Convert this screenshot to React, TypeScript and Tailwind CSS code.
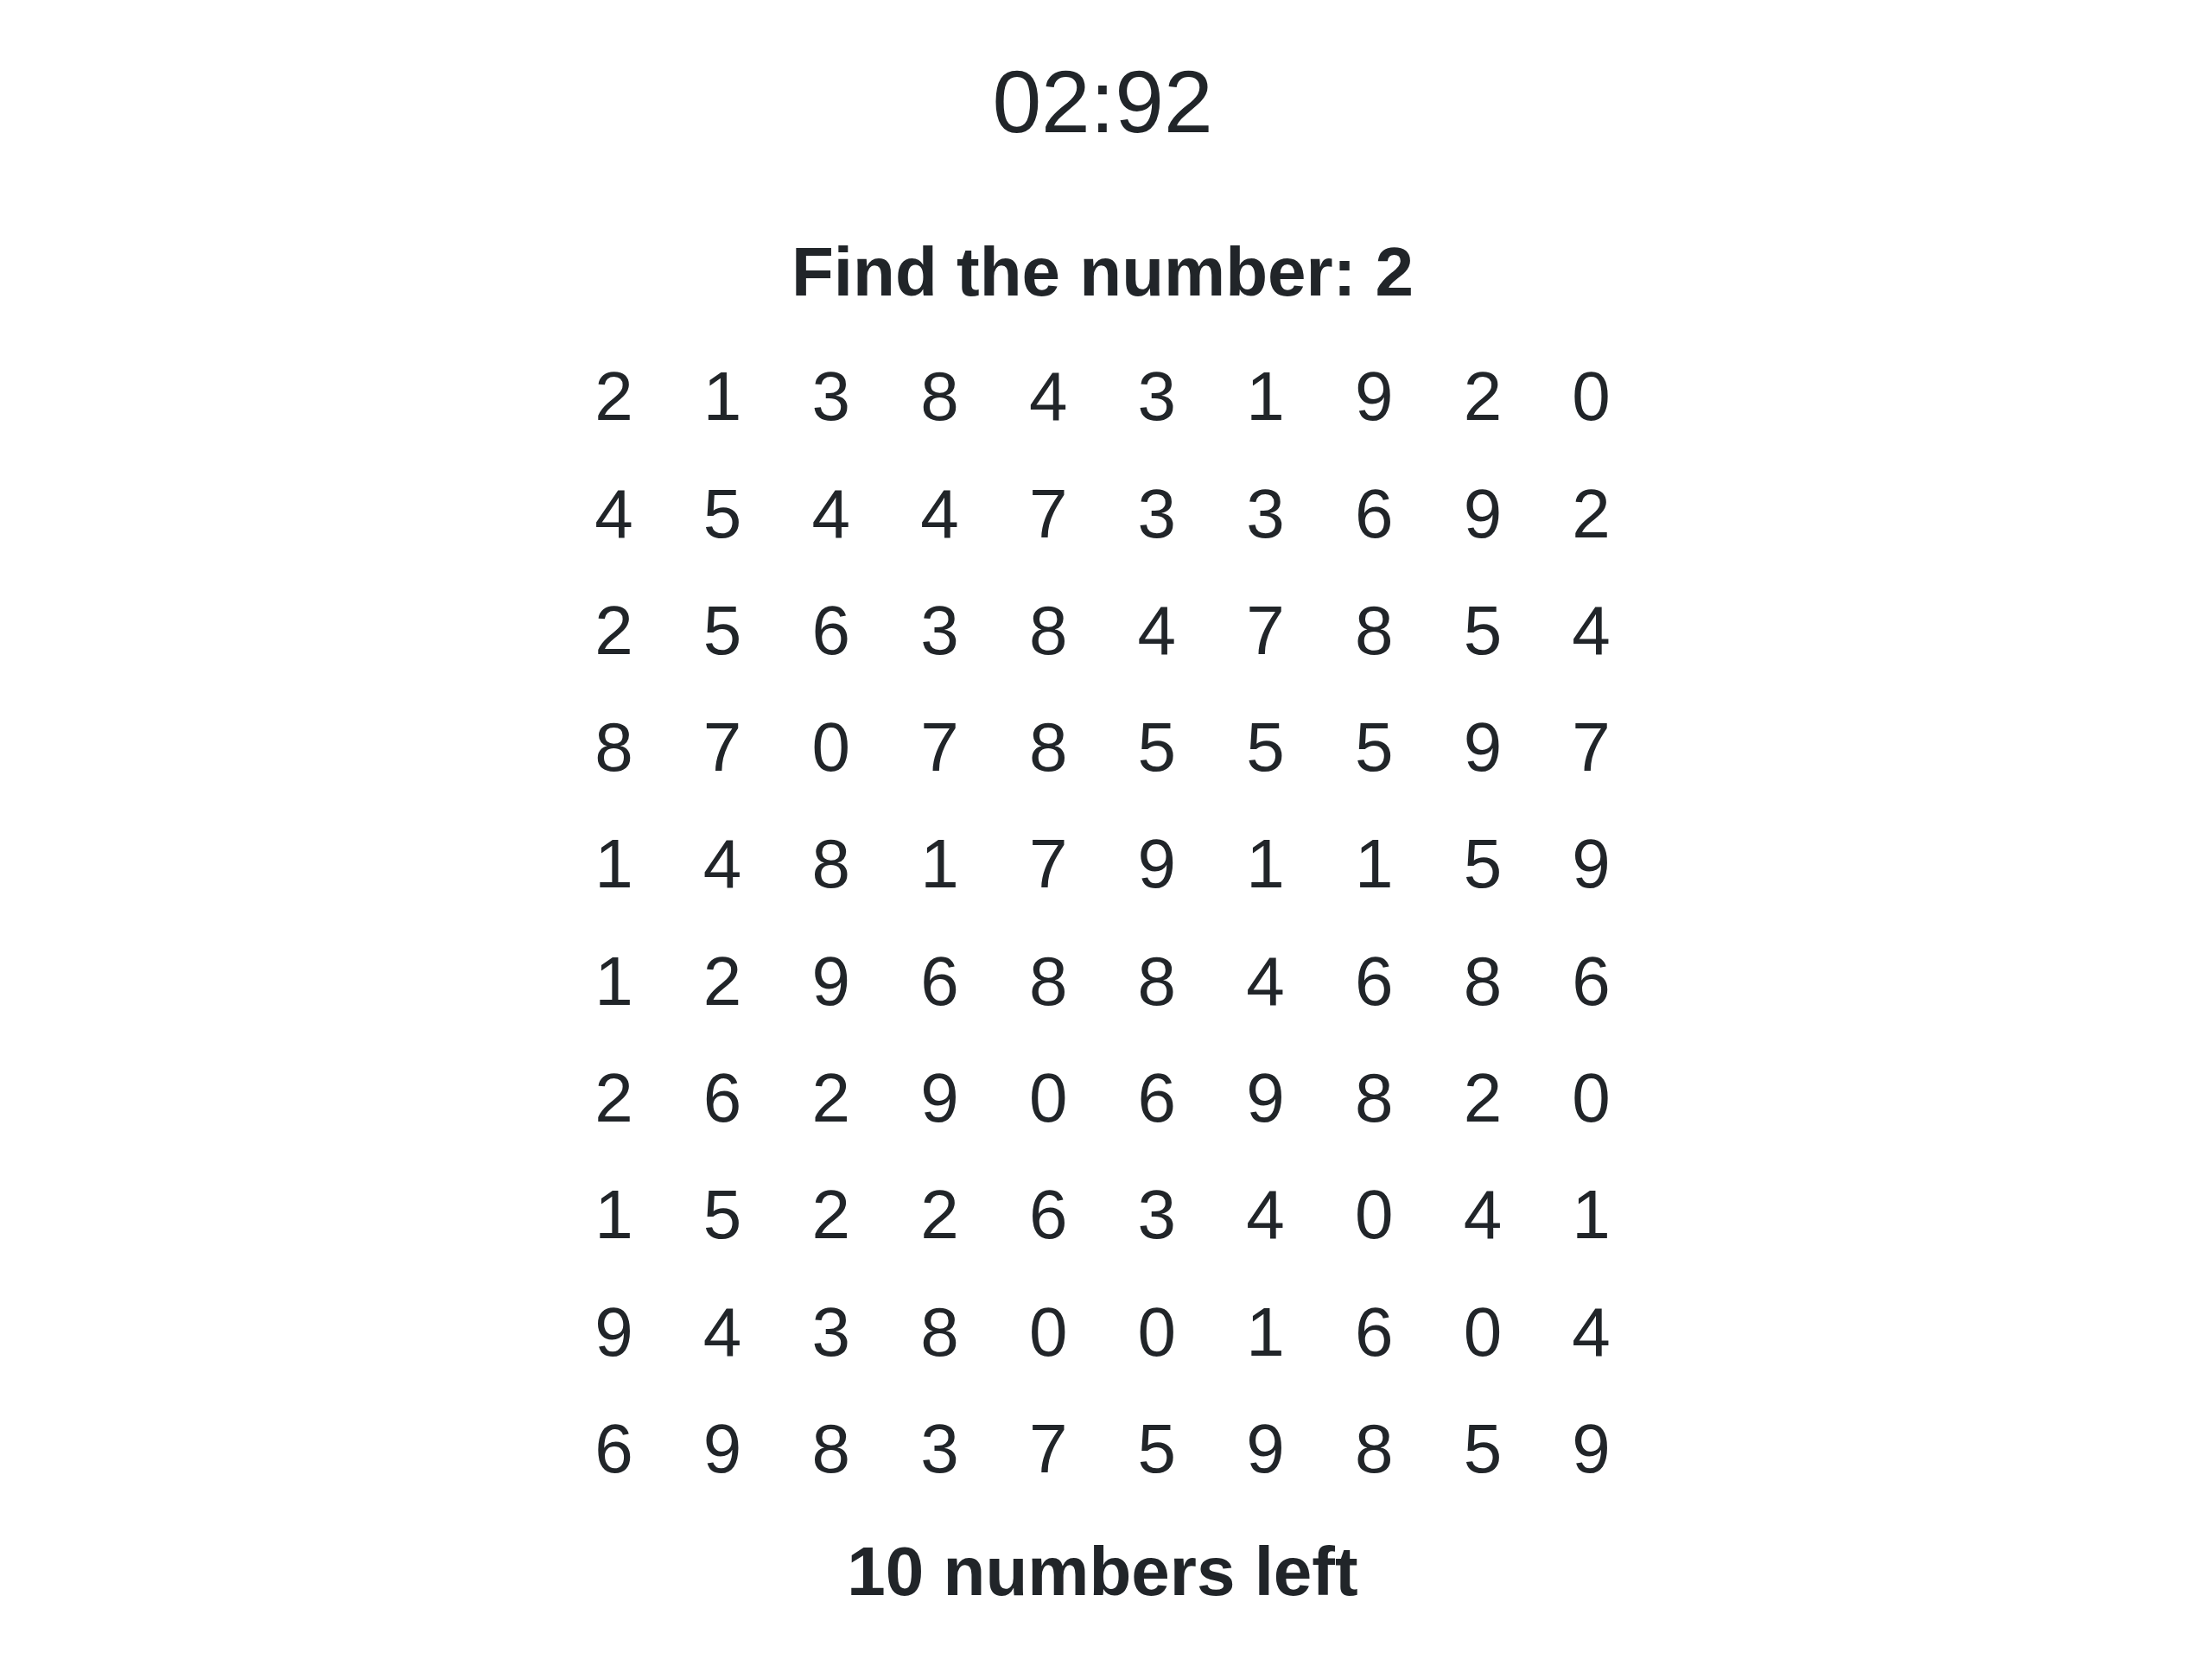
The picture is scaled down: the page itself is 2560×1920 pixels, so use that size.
const rows = [
  [2, 1, 3, 8, 4, 3, 1, 9, 2, 0],
  [4, 5, 4, 4, 7, 3, 3, 6, 9, 2],
  [2, 5, 6, 3, 8, 4, 7, 8, 5, 4],
  [8, 7, 0, 7, 8, 5, 5, 5, 9, 7],
  [1, 4, 8, 1, 7, 9, 1, 1, 5, 9],
  [1, 2, 9, 6, 8, 8, 4, 6, 8, 6],
  [2, 6, 2, 9, 0, 6, 9, 8, 2, 0],
  [1, 5, 2, 2, 6, 3, 4, 0, 4, 1],
  [9, 4, 3, 8, 0, 0, 1, 6, 0, 4],
  [6, 9, 8, 3, 7, 5, 9, 8, 5, 9],
]

export default function App() {
  return (
    <div className="flex min-h-[1920px] flex-col items-center bg-white pr-[8px] pt-[67px] [font-family:'Liberation_Sans',Arial,sans-serif] text-[#212529]">
      <div className="text-[102px] leading-none">02:92</div>

      <h2 className="mt-[106px] text-[80px] font-bold leading-none">Find the number: 2</h2>

      <div className="mt-[36.6px] grid grid-cols-[repeat(10,125.7px)]">
        {rows.flatMap((row, r) =>
          row.map((n, c) => (
            <div key={`${r}-${c}`} className="flex h-[135.3px] items-center justify-center text-[80px] leading-none">
              {n}
            </div>
          ))
        )}
      </div>

      <div className="mt-[34.7px] text-[80px] font-bold leading-none">10 numbers left</div>
    </div>
  )
}
